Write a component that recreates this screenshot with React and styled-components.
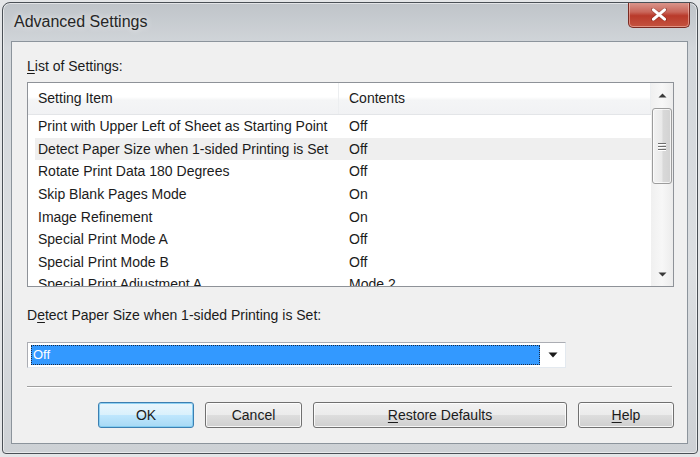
import React from 'react';
import styled, { createGlobalStyle } from 'styled-components';

const GlobalStyle = createGlobalStyle`
  html, body {
    margin: 0;
    padding: 0;
    background: #e4e6e8;
  }
  body {
    font-family: "Liberation Sans", Arial, sans-serif;
    color: #1b1b1b;
  }
`;

const settings = [
  { item: 'Print with Upper Left of Sheet as Starting Point', value: 'Off' },
  { item: 'Detect Paper Size when 1-sided Printing is Set', value: 'Off', selected: true },
  { item: 'Rotate Print Data 180 Degrees', value: 'Off' },
  { item: 'Skip Blank Pages Mode', value: 'On' },
  { item: 'Image Refinement', value: 'On' },
  { item: 'Special Print Mode A', value: 'Off' },
  { item: 'Special Print Mode B', value: 'Off' },
  { item: 'Special Print Adjustment A', value: 'Mode 2' },
];

export default function App() {
  return (
    <>
      <GlobalStyle />
      <Window>
        <TitleBar>
          <Title>Advanced Settings</Title>
          <CloseButton aria-label="Close">
            <svg width="16" height="13" viewBox="0 0 16 13">
              <path d="M2 1.5 L14 11.5 M14 1.5 L2 11.5" stroke="#5a1a12" strokeWidth="4.2" strokeLinecap="round" opacity="0.35" />
              <path d="M2.5 1.8 L13.5 11.2 M13.5 1.8 L2.5 11.2" stroke="#ffffff" strokeWidth="3" strokeLinecap="round" />
            </svg>
          </CloseButton>
        </TitleBar>

        <Client>
          <Label $top={16} $bottom={8}><u>L</u>ist of Settings:</Label>

          <ListBox>
            <ListBody>
              <Header>
                <HeaderCell $width={311}>Setting Item</HeaderCell>
                <HeaderCell>Contents</HeaderCell>
              </Header>
              <Rows>
                {settings.map((s) => (
                  <Row key={s.item} $selected={s.selected}>
                    <ItemCell>{s.item}</ItemCell>
                    <ValueCell>{s.value}</ValueCell>
                  </Row>
                ))}
              </Rows>
            </ListBody>
            <ScrollBar>
              <Arrow>
                <svg width="9" height="5" viewBox="0 0 9 5"><path d="M0.5 4.5 L4.5 0.5 L8.5 4.5 Z" fill="#3a3a3a" /></svg>
              </Arrow>
              <Track>
                <Thumb>
                  <Grip>
                    <span /><span /><span />
                  </Grip>
                </Thumb>
              </Track>
              <Arrow>
                <svg width="9" height="5" viewBox="0 0 9 5"><path d="M0.5 0.5 L8.5 0.5 L4.5 4.5 Z" fill="#3a3a3a" /></svg>
              </Arrow>
            </ScrollBar>
          </ListBox>

          <Label $top={20} $bottom={0}>D<u>e</u>tect Paper Size when 1-sided Printing is Set:</Label>

          <Combo>
            <ComboValue>Off</ComboValue>
            <ComboButton>
              <svg width="10" height="6" viewBox="0 0 10 6"><path d="M0.5 0.5 L9.5 0.5 L5 5.5 Z" fill="#1a1a1a" /></svg>
            </ComboButton>
          </Combo>

          <Separator />

          <ButtonRow>
            <Button $width={96} $default>OK</Button>
            <Button $width={97}>Cancel</Button>
            <Button $width={254}><u>R</u>estore Defaults</Button>
            <Button $width={96}><u>H</u>elp</Button>
          </ButtonRow>
        </Client>
      </Window>
    </>
  );
}

const Window = styled.div`
  box-sizing: border-box;
  width: 696px;
  height: 452px;
  margin: 2px 2px 3px 2px;
  border: 1px solid #4a5056;
  border-radius: 8px 8px 4px 4px;
  background: linear-gradient(180deg, #bfc4c9 0%, #d3d7db 10%, #dcdfe2 60%, #cdd1d5 100%);
  box-shadow: inset 0 0 0 1px rgba(255, 255, 255, 0.55);
  display: flex;
  flex-direction: column;
  overflow: hidden;
`;

const TitleBar = styled.div`
  height: 38px;
  display: flex;
  align-items: flex-start;
  padding-left: 11px;
  flex-shrink: 0;
`;

const Title = styled.div`
  font-size: 16px;
  line-height: 18px;
  margin-top: 10px;
  color: #262626;
  text-shadow: 0 0 6px rgba(255, 255, 255, 0.9);
`;

const CloseButton = styled.div`
  margin-left: auto;
  margin-right: 7px;
  margin-top: -1px;
  width: 62px;
  height: 26px;
  box-sizing: border-box;
  border: 1px solid #7a2a22;
  border-top: none;
  border-radius: 0 0 5px 5px;
  background: linear-gradient(180deg, #dc9a90 0%, #c9665a 40%, #b93a2b 55%, #c4533f 100%);
  box-shadow: inset 0 0 0 1px rgba(255, 210, 200, 0.5);
  display: flex;
  align-items: center;
  justify-content: center;
`;

const Client = styled.div`
  flex: 1;
  margin: 0 9px 9px 8px;
  border: 1px solid #8c949c;
  background: #f0f0f0;
  padding: 0 13px 0 15px;
  display: flex;
  flex-direction: column;
  font-size: 14px;
`;

const Label = styled.div`
  margin-top: ${(p) => p.$top}px;
  margin-bottom: ${(p) => p.$bottom}px;
  height: 16px;
  line-height: 16px;
  u { text-decoration-thickness: 1px; text-underline-offset: 2px; }
`;

const ListBox = styled.div`
  box-sizing: border-box;
  height: 205px;
  border: 1px solid #8e9298;
  background: #fff;
  display: flex;
  overflow: hidden;
`;

const ListBody = styled.div`
  flex: 1;
  display: flex;
  flex-direction: column;
  overflow: hidden;
`;

const Header = styled.div`
  height: 31px;
  flex-shrink: 0;
  display: flex;
  border-bottom: 1px solid #e3e5e8;
  background: linear-gradient(180deg, #ffffff 0%, #ffffff 45%, #f4f5f6 55%, #f1f2f4 100%);
`;

const HeaderCell = styled.div`
  box-sizing: border-box;
  width: ${(p) => (p.$width ? `${p.$width}px` : 'auto')};
  flex: ${(p) => (p.$width ? 'none' : '1')};
  padding-left: 10px;
  line-height: 31px;
  border-right: 1px solid #eceef0;
`;

const Rows = styled.div`
  padding-left: 7px;
`;

const Row = styled.div`
  height: 22.6px;
  display: flex;
  align-items: center;
  background: ${(p) => (p.$selected ? '#efefef' : 'transparent')};
`;

const ItemCell = styled.div`
  width: 311px;
  padding-left: 3px;
  white-space: nowrap;
`;

const ValueCell = styled.div`
  flex: 1;
`;

const ScrollBar = styled.div`
  width: 22px;
  display: flex;
  flex-direction: column;
  background: linear-gradient(90deg, #f0f0f0 0%, #f7f7f7 50%, #ececec 100%);
`;

const Arrow = styled.div`
  height: 24px;
  display: flex;
  align-items: center;
  justify-content: center;
`;

const Track = styled.div`
  flex: 1;
  padding-top: 1px;
`;

const Thumb = styled.div`
  box-sizing: border-box;
  margin: 0 1px;
  height: 76px;
  border: 1px solid #9c9c9c;
  border-radius: 3px;
  background: linear-gradient(90deg, #f2f2f2 0%, #e9e9e9 50%, #d9d9d9 55%, #d2d2d2 100%);
  box-shadow: inset 0 0 0 1px rgba(255, 255, 255, 0.7);
  display: flex;
  align-items: center;
  justify-content: center;
`;

const Grip = styled.div`
  display: flex;
  flex-direction: column;
  gap: 2px;
  span {
    display: block;
    width: 8px;
    height: 1px;
    background: #6e6e6e;
    box-shadow: 0 1px 0 #ffffff;
  }
`;

const Combo = styled.div`
  box-sizing: border-box;
  margin-top: 19px;
  width: 539px;
  height: 26px;
  border: 1px solid #abadb3;
  border-right-color: #e3e9ef;
  border-bottom-color: #e3e9ef;
  background: #fff;
  display: flex;
  align-items: stretch;
  padding: 2px 0 2px 3px;
`;

const ComboValue = styled.div`
  flex: 1;
  background: #3399ff;
  color: #fff;
  outline: 1px dotted #1a2a44;
  outline-offset: -1px;
  line-height: 20px;
  padding-left: 2px;
  font-size: 13px;
`;

const ComboButton = styled.div`
  width: 25px;
  display: flex;
  align-items: center;
  justify-content: center;
`;

const Separator = styled.div`
  margin-top: 18px;
  height: 1px;
  background: #a0a0a0;
  box-shadow: 0 1px 0 #ffffff;
  margin-right: 2px;
`;

const ButtonRow = styled.div`
  margin-top: 15px;
  display: flex;
  justify-content: flex-end;
  gap: 11px;
`;

const Button = styled.div`
  box-sizing: border-box;
  width: ${(p) => p.$width}px;
  height: 26px;
  border: 1px solid ${(p) => (p.$default ? '#3c7fb1' : '#707070')};
  border-radius: 3px;
  background: ${(p) =>
    p.$default
      ? 'linear-gradient(180deg, #eaf6fd 0%, #d9f0fc 50%, #bee6fd 52%, #a7d9f5 100%)'
      : 'linear-gradient(180deg, #f2f2f2 0%, #ebebeb 50%, #dddddd 52%, #cfcfcf 100%)'};
  box-shadow: inset 0 0 0 1px ${(p) => (p.$default ? 'rgba(120, 200, 240, 0.8)' : 'rgba(255, 255, 255, 0.8)')};
  display: flex;
  align-items: center;
  justify-content: center;
  font-size: 14px;
  u { text-decoration-thickness: 1px; text-underline-offset: 2px; }
`;
